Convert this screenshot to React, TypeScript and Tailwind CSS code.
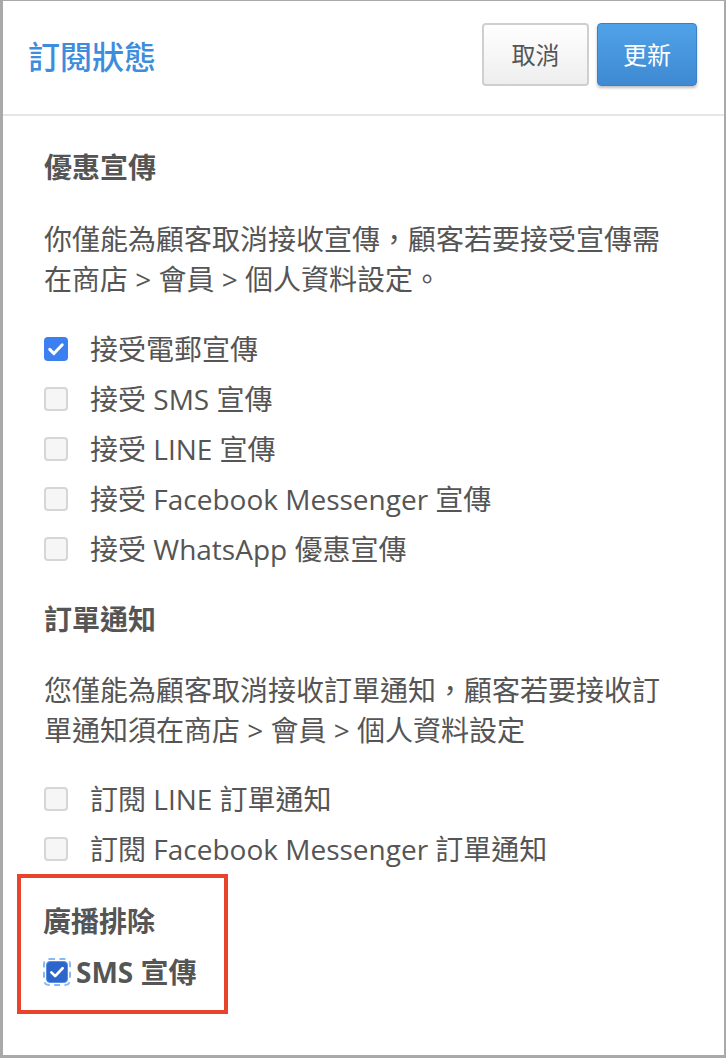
import { useState } from "react";

type Item = { id: string; label: string; checked: boolean };

const promoItems: Item[] = [
  { id: "email", label: "接受電郵宣傳", checked: true },
  { id: "sms", label: "接受 SMS 宣傳", checked: false },
  { id: "line", label: "接受 LINE 宣傳", checked: false },
  { id: "fb", label: "接受 Facebook Messenger 宣傳", checked: false },
  { id: "wa", label: "接受 WhatsApp 優惠宣傳", checked: false },
];

const orderItems: Item[] = [
  { id: "line-order", label: "訂閱 LINE 訂單通知", checked: false },
  { id: "fb-order", label: "訂閱 Facebook Messenger 訂單通知", checked: false },
];

function CheckIcon({ size = "w-[20px] h-[20px]" }: { size?: string }) {
  return (
    <svg viewBox="0 0 24 24" className={size} fill="none">
      <path d="M4.5 12.5l5 5L19.5 7" stroke="white" strokeWidth="3.6" strokeLinecap="round" strokeLinejoin="round" />
    </svg>
  );
}

function Box({ checked, onClick }: { checked: boolean; onClick: () => void }) {
  return (
    <button
      type="button"
      onClick={onClick}
      className={
        checked
          ? "w-[24px] h-[24px] rounded-[4px] bg-[#3b7ff0] flex items-center justify-center shrink-0"
          : "w-[24px] h-[24px] rounded-[4px] bg-[#f6f6f6] border-2 border-[#d6d6d6] shrink-0"
      }
    >
      {checked && <CheckIcon />}
    </button>
  );
}

function CheckList({ items }: { items: Item[] }) {
  const [state, setState] = useState(items);
  const toggle = (id: string) =>
    setState(state.map((i) => (i.id === id ? { ...i, checked: !i.checked } : i)));

  return (
    <div className="flex flex-col">
      {state.map((i) => (
        <div key={i.id} className="h-[50px] flex items-center gap-[22px]">
          <Box checked={i.checked} onClick={() => toggle(i.id)} />
          <span className="text-[28px] leading-[40px] text-[#555]">{i.label}</span>
        </div>
      ))}
    </div>
  );
}

function App() {
  const [smsExcluded, setSmsExcluded] = useState(true);

  return (
    <div
      className="w-[726px] h-[1058px] bg-white border-l-[3px] border-t border-r-2 border-b-[3px] border-[#a9a9a9] overflow-hidden"
      style={{ fontFamily: '"Open Sans", "Noto Sans CJK TC", sans-serif' }}
    >
      <div className="h-[115px] flex justify-between items-start pl-[25px] pr-[27px] pt-[22px] border-b-2 border-[#e6e6e6]">
        <h1 className="text-[32px] leading-[68px] text-[#3d8ddc] font-medium">訂閱狀態</h1>
        <div className="flex gap-[8px]">
          <button className="w-[107px] h-[63px] rounded-[4px] border-2 border-[#cfcfcf] bg-gradient-to-b from-white to-[#eeeeee] text-[24px] text-[#555]">
            取消
          </button>
          <button className="w-[100px] h-[63px] rounded-[4px] border border-[#3a80c6] bg-gradient-to-b from-[#50a2e8] to-[#3f8ad2] text-[24px] text-white shadow-[0_2px_3px_rgba(0,0,0,0.25)]">
            更新
          </button>
        </div>
      </div>

      <div className="pl-[41px] pt-[31px]">
        <h2 className="text-[28px] leading-[40px] font-bold text-[#555]">優惠宣傳</h2>
        <p className="mt-[32px] w-[630px] text-[28px] leading-[40px] text-[#555]">
          你僅能為顧客取消接收宣傳，顧客若要接受宣傳需在商店 &gt; 會員 &gt; 個人資料設定。
        </p>
        <div className="mt-[25px]">
          <CheckList items={promoItems} />
        </div>

        <h2 className="mt-[25px] text-[28px] leading-[40px] font-bold text-[#555]">訂單通知</h2>
        <p className="mt-[31px] w-[630px] text-[28px] leading-[40px] text-[#555]">
          您僅能為顧客取消接收訂單通知，顧客若要接收訂單通知須在商店 &gt; 會員 &gt; 個人資料設定
        </p>
        <div className="mt-[24px]">
          <CheckList items={orderItems} />
        </div>

        <div className="-ml-[27px] w-[211px] border-4 border-[#e8432b] pl-[22px] pt-[23px] pb-[18px]">
          <h2 className="text-[28px] leading-[40px] font-bold text-[#555]">廣播排除</h2>
          <div className="mt-[11px] h-[40px] flex items-center gap-[5px]">
            <button
              type="button"
              onClick={() => setSmsExcluded(!smsExcluded)}
              className="w-[28px] h-[28px] rounded-[6px] border-2 border-dashed border-[#8ab8f7] flex items-center justify-center"
            >
              <span className="w-[22px] h-[22px] rounded-[4px] bg-[#2c66cc] border border-[#5b8fe0] flex items-center justify-center">
                {smsExcluded && <CheckIcon size="w-[18px] h-[18px]" />}
              </span>
            </button>
            <span className="text-[28px] leading-[40px] font-bold text-[#555]">SMS 宣傳</span>
          </div>
        </div>
      </div>
    </div>
  );
}

export default App;
